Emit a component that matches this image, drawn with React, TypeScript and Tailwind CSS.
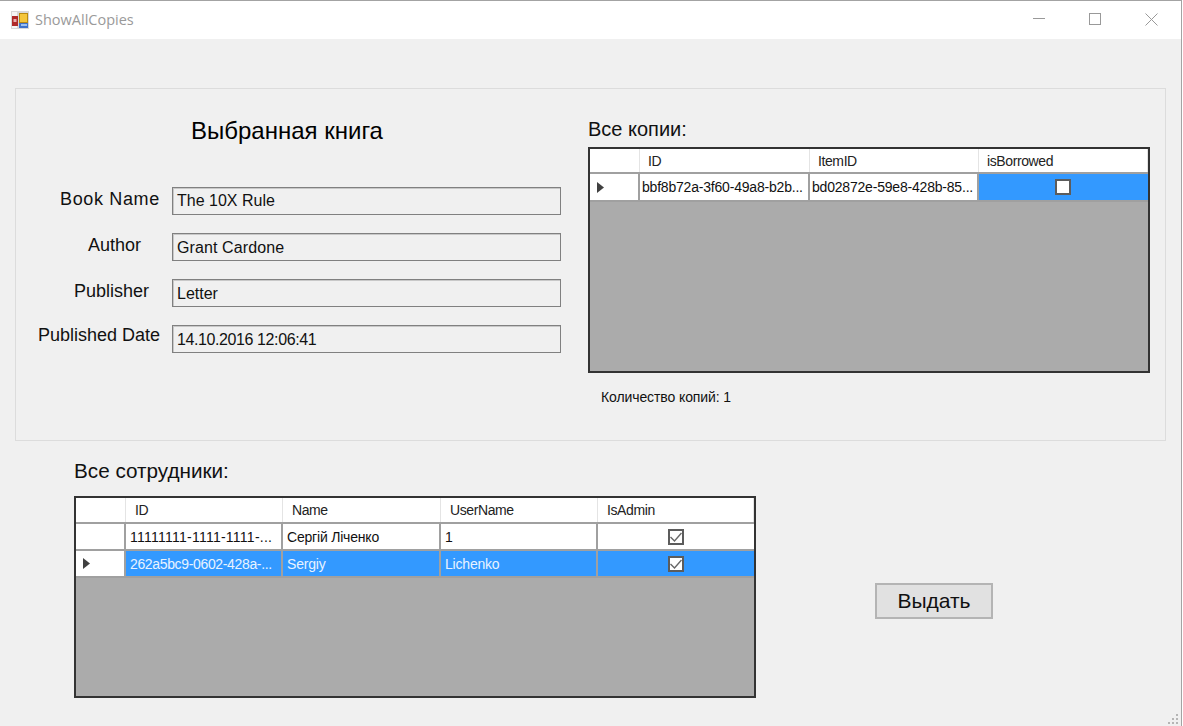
import React from 'react';

interface Cell {
  text?: string;
  check?: boolean;
  track?: string;
}

interface DataGridProps {
  className: string;
  columns: string;
  headerH: string;
  headerPad: string;
  cellPad: string;
  headers: string[];
  rows: { cells: Cell[]; selected?: boolean; current?: boolean; rowH: string; fullSelect?: boolean }[];
}

function AppIcon() {
  return (
    <svg width="18" height="18" viewBox="0 0 18 18" className="shrink-0">
      <rect x="0" y="0" width="18" height="18" fill="#d8d8d8" />
      <rect x="1" y="1" width="5" height="4" fill="#f6f6f6" />
      <rect x="1" y="15" width="5" height="2" fill="#f6f6f6" />
      <rect x="1" y="5" width="6" height="10" fill="#b02a2a" />
      <rect x="2.5" y="8" width="3" height="3" fill="#e8b0b0" />
      <rect x="8" y="2" width="9" height="10" fill="#b98a10" />
      <rect x="9" y="3" width="7" height="8" fill="#f5c63a" />
      <rect x="8" y="12" width="9" height="5" fill="#3f72c8" />
      <rect x="10" y="13" width="6" height="2" fill="#9dc0ee" />
    </svg>
  );
}

function Arrow() {
  return (
    <svg width="7" height="11" viewBox="0 0 7 11">
      <path d="M0 0 L7 5.5 L0 11 Z" fill="#404040" />
    </svg>
  );
}

function GridCheck({ checked }: { checked: boolean }) {
  return (
    <span className="w-4 h-4 border-2 border-[#5c5c5c] bg-white flex items-center justify-center">
      {checked && (
        <svg width="12" height="12" viewBox="0 0 12 12">
          <path d="M0.5 6 L4.5 10 L11.5 2" fill="none" stroke="#666" strokeWidth="1.4" />
        </svg>
      )}
    </span>
  );
}

function DataGrid({ className, columns, headerH, headerPad, cellPad, headers, rows }: DataGridProps) {
  return (
    <div className={`border-2 border-[#333] bg-[#ababab] ${className}`}>
      <div className={`grid bg-white border-b-2 border-[#a0a0a0] ${columns} ${headerH}`}>
        <div className="border-r border-[#e4e4e4]" />
        {headers.map((h) => (
          <div key={h} className={`border-r border-[#e4e4e4] pt-[1px] flex items-center text-[14px] tracking-[-0.4px] text-[#222] ${headerPad}`}>
            {h}
          </div>
        ))}
      </div>
      {rows.map((row, i) => (
        <div key={i} className={`grid border-b-2 border-[#a0a0a0] ${columns} ${row.rowH}`}>
          <div className="bg-white border-r-2 border-[#a0a0a0] flex items-center pl-[7px]">
            {row.current && <Arrow />}
          </div>
          {row.cells.map((cell, j) => (
            <div
              key={j}
              className={`border-r-2 border-[#a0a0a0] last:border-r-0 flex items-center text-[14px] whitespace-nowrap overflow-hidden ${
                cell.track ?? 'tracking-[-0.2px]'
              } ${
                row.selected && (row.fullSelect || cell.check !== undefined) ? 'bg-[#3399ff] text-[#e8f3ff]' : 'bg-white text-[#111]'
              } ${cell.check !== undefined ? 'justify-center pr-[1px]' : `pt-[1px] ${cellPad}`}`}
            >
              {cell.check !== undefined ? <GridCheck checked={cell.check} /> : cell.text}
            </div>
          ))}
        </div>
      ))}
    </div>
  );
}

const fields = [
  { label: 'Book Name', value: 'The 10X Rule', labelClass: 'pl-[44px] tracking-[0.65px] pb-[4px]', valueClass: 'pb-[1px]' },
  { label: 'Author', value: 'Grant Cardone', labelClass: 'pl-[72px] pb-[4px]', valueClass: 'pt-[1px] tracking-[0.1px]' },
  { label: 'Publisher', value: 'Letter', labelClass: 'pl-[58px] pb-[4px]', valueClass: 'pt-[1px]' },
  { label: 'Published Date', value: '14.10.2016 12:06:41', labelClass: 'pl-[22px] pb-[8px]', valueClass: 'pt-[1px] tracking-[-0.4px]' },
];

export default function App() {
  return (
    <div className="w-[1183px] h-[726px] bg-white overflow-hidden font-['Liberation_Sans',sans-serif]">
      <div className="w-[1182px] h-[726px] border-t border-r border-[#a3a3a3] flex flex-col">
        <div className="h-[38px] bg-white flex items-center pl-[11px] shrink-0">
          <AppIcon />
          <span className="ml-[6px] text-[14.5px] text-[#9a9a9a] font-['Open_Sans',sans-serif]">ShowAllCopies</span>
          <div className="ml-auto mr-[23px] mb-[2px] flex items-center gap-[44px]">
            <svg width="12" height="12" viewBox="0 0 12 12">
              <path d="M0 5.5 H12" stroke="#999" strokeWidth="1" />
            </svg>
            <svg width="12" height="12" viewBox="0 0 12 12">
              <rect x="0.5" y="0.5" width="11" height="11" fill="none" stroke="#999" strokeWidth="1" />
            </svg>
            <svg width="13" height="13" viewBox="0 0 13 13">
              <path d="M0.5 0.5 L12.5 12.5 M12.5 0.5 L0.5 12.5" stroke="#999" strokeWidth="1" />
            </svg>
          </div>
        </div>

        <div className="flex-1 bg-[#f0f0f0] flex flex-col relative">
          <div className="ml-[15px] mt-[49px] w-[1151px] h-[353px] border border-[#dcdcdc] flex shrink-0">
            <div className="w-[572px] shrink-0">
              <h1 className="mt-[27px] pr-[30px] h-[30px] flex items-center justify-center text-[24px] leading-none text-black">
                Выбранная книга
              </h1>
              <div className="mt-[41px] flex flex-col gap-[18px]">
                {fields.map((f) => (
                  <div key={f.label} className="flex items-center h-[28px]">
                    <div className={`w-[156px] shrink-0 text-[18px] leading-none text-[#111] whitespace-nowrap ${f.labelClass}`}>
                      {f.label}
                    </div>
                    <div
                      className={`w-[389px] h-[28px] border border-[#808080] shadow-[inset_1px_1px_0_#c8c8c8] bg-[#f0f0f0] flex items-center pl-[4px] text-[16px] text-[#111] ${f.valueClass}`}
                    >
                      {f.value}
                    </div>
                  </div>
                ))}
              </div>
            </div>

            <div className="flex-1">
              <div className="mt-[28px] h-[24px] text-[20px] leading-[24px] text-[#111]">Все копии:</div>
              <DataGrid
                className="mt-[6px] w-[562px] h-[226px]"
                columns="grid-cols-[50px_170px_169px_1fr]"
                headerH="h-[25px]"
                headerPad="pl-[8px]"
                cellPad="pl-[2px]"
                headers={['ID', 'ItemID', 'isBorrowed']}
                rows={[
                  {
                    current: true,
                    selected: true,
                    rowH: 'h-[28px]',
                    cells: [
                      { text: 'bbf8b72a-3f60-49a8-b2b...' },
                      { text: 'bd02872e-59e8-428b-85...' },
                      { check: false },
                    ],
                  },
                ]}
              />
              <div className="mt-[14px] ml-[13px] text-[14px] tracking-[-0.1px] text-[#111]">Количество копий: 1</div>
            </div>
          </div>

          <div className="flex shrink-0">
            <div className="ml-[74px] w-[682px] shrink-0">
              <div className="mt-[18px] h-[24px] text-[20.7px] leading-[24px] text-[#111]">Все сотрудники:</div>
              <DataGrid
                className="mt-[13px] w-[682px] h-[202px]"
                columns="grid-cols-[50px_157px_158px_157px_1fr]"
                headerH="h-[26px]"
                headerPad="pl-[9px]"
                cellPad="pl-[4px]"
                headers={['ID', 'Name', 'UserName', 'IsAdmin']}
                rows={[
                  {
                    rowH: 'h-[27px]',
                    cells: [
                      { text: '11111111-1111-1111-...', track: 'tracking-[0.25px]' },
                      { text: 'Сергій Ліченко' },
                      { text: '1' },
                      { check: true },
                    ],
                  },
                  {
                    current: true,
                    selected: true,
                    fullSelect: true,
                    rowH: 'h-[27px]',
                    cells: [
                      { text: '262a5bc9-0602-428a-...', track: 'tracking-[-0.35px]' },
                      { text: 'Sergiy' },
                      { text: 'Lichenko' },
                      { check: true },
                    ],
                  },
                ]}
              />
            </div>
            <button className="ml-[119px] mt-[142px] w-[118px] h-[36px] pb-[3px] border-2 border-[#b4b4b4] bg-[#e1e1e1] text-[21px] text-[#111]">
              Выдать
            </button>
          </div>

          <svg width="11" height="12" viewBox="0 0 11 12" className="absolute right-[2px] bottom-0">
            <g fill="#b5b5b5">
              <rect x="8" y="0" width="2" height="2" />
              <rect x="4" y="4" width="2" height="2" />
              <rect x="8" y="4" width="2" height="2" />
              <rect x="0" y="8" width="2" height="2" />
              <rect x="4" y="8" width="2" height="2" />
              <rect x="8" y="8" width="2" height="2" />
            </g>
          </svg>
        </div>
      </div>
    </div>
  );
}
